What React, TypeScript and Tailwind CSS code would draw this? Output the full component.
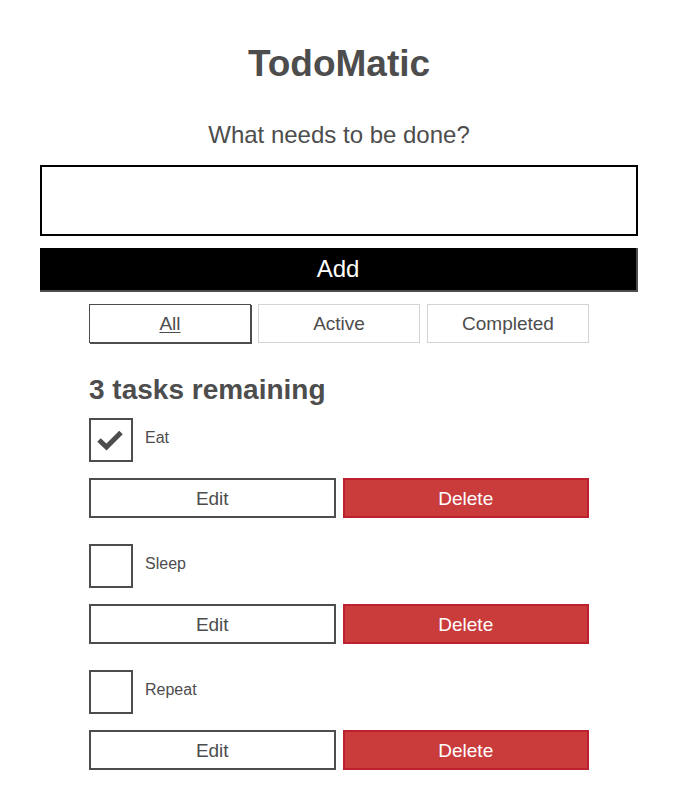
import React from "react"

interface Task {
  id: string
  name: string
  completed: boolean
}

const tasks: Task[] = [
  { id: "todo-0", name: "Eat", completed: true },
  { id: "todo-1", name: "Sleep", completed: false },
  { id: "todo-2", name: "Repeat", completed: false },
]

const filters = ["All", "Active", "Completed"]

const Todo = ({ task }: { task: Task }) => (
  <li className="flex flex-col">
    <div className="flex items-start">
      <span className="relative block w-[44px] h-[44px] border-2 border-[#4d4d4d] bg-white shrink-0">
        {task.completed && (
          <svg className="absolute left-[-2px] top-[-2px]" width="44" height="44" viewBox="0 0 44 44">
            <polyline
              points="10,22 17.5,29 32,14.5"
              fill="none"
              stroke="#4d4d4d"
              strokeWidth="5"
            />
          </svg>
        )}
      </span>
      <label className="pl-[12px] pt-[8px] text-[16px] leading-[24px]">{task.name}</label>
    </div>
    <div className="flex gap-[7px] mt-[16px]">
      <button className="flex-1 h-[40px] border-2 border-[#4d4d4d] bg-white text-[19px] leading-none text-[#4d4d4d]">
        Edit
      </button>
      <button className="flex-1 h-[40px] border-2 border-[#bd2130] bg-[#ca3c3c] text-[19px] leading-none text-white">
        Delete
      </button>
    </div>
  </li>
)

export default function App() {
  return (
    <div className="min-h-[807px] bg-white px-[40px] pt-[42px] text-[#4d4d4d] font-['Liberation_Sans',Arial,sans-serif]">
      <h1 className="text-center text-[37px] leading-[44px] font-bold">TodoMatic</h1>

      <form className="flex flex-col">
        <label className="mt-[35px] text-center text-[24px] leading-[28px]">What needs to be done?</label>
        <input
          type="text"
          className="mt-[16px] h-[71px] w-full border-2 border-black px-5 text-[19px] outline-none"
        />
        <button
          type="button"
          className="mt-[12px] h-[44px] w-full bg-black border-b-2 border-r-2 border-[#4d4d4d] text-white text-[24px] leading-none"
        >
          Add
        </button>
      </form>

      <div className="w-[500px] mx-auto">
        <div className="flex gap-[7px] mt-[12px]">
          {filters.map((f) =>
            f === "All" ? (
              <button
                key={f}
                className="flex-1 h-[39px] border border-[#4d4d4d] shadow-[1px_1px_0_#4d4d4d] bg-white text-[19px] leading-none underline underline-offset-2"
              >
                {f}
              </button>
            ) : (
              <button key={f} className="flex-1 h-[39px] border border-[#d3d3d3] bg-white text-[19px] leading-none">
                {f}
              </button>
            )
          )}
        </div>

        <h2 className="mt-[31px] text-[28px] leading-[32px] font-bold">3 tasks remaining</h2>

        <ul className="mt-[12px] flex flex-col gap-[26px]">
          {tasks.map((task) => (
            <Todo task={task} key={task.id} />
          ))}
        </ul>
      </div>
    </div>
  )
}
